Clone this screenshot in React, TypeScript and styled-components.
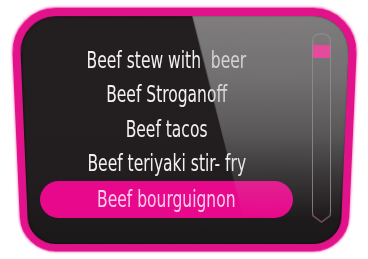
import React from "react";
import styled, { createGlobalStyle } from "styled-components";

const Global = createGlobalStyle`
  html, body { margin: 0; padding: 0; background: #ffffff; }
  body {
    width: 368px;
    height: 259px;
    overflow: hidden;
    font-family: "DejaVu Sans Condensed", "DejaVu Sans", sans-serif;
  }
`;

const Device = styled.div`
  position: relative;
  box-sizing: border-box;
  width: 337px;
  height: 245px;
  margin: 11px 0 0 16px;
  padding: 22px 22px 0 24px;
  display: flex;
  align-items: flex-start;
  gap: 19px;

  &::before {
    content: "";
    position: absolute;
    inset: 0;
    z-index: 0;
    box-sizing: border-box;
    border: 8px solid #e2128a;
    border-radius: 44px 44px 36px 36px;
    background: linear-gradient(to bottom, #231f20 0%, #221e1f 70%, #1b1819 100%);
    transform: perspective(400px) rotateX(-6deg);
    box-shadow: 0 0 2px 1px rgba(236, 60, 160, 0.45), inset 0 0 3px rgba(0, 0, 0, 0.8);
  }

  &::after {
    content: "";
    position: absolute;
    inset: 0;
    z-index: 2;
    box-sizing: border-box;
    border: 8px solid transparent;
    border-radius: 44px 44px 36px 36px;
    background: linear-gradient(
        to bottom,
        rgba(186, 186, 186, 0.6) 0%,
        rgba(186, 186, 186, 0.52) 25%,
        rgba(186, 186, 186, 0.36) 50%,
        rgba(186, 186, 186, 0.14) 70%,
        rgba(186, 186, 186, 0) 88%
      )
      padding-box;
    clip-path: polygon(174px 0, 100% 0, 100% 100%, 238px 100%);
    transform: perspective(400px) rotateX(-6deg);
    pointer-events: none;
  }
`;

const List = styled.ul`
  position: relative;
  z-index: 1;
  flex: none;
  width: 253px;
  margin: 0;
  padding: 10px 0 0;
  list-style: none;
  display: flex;
  flex-direction: column;
`;

const Item = styled.li<{ $active?: boolean }>`
  height: ${(p) => (p.$active ? 37 : 34.5)}px;
  display: flex;
  align-items: center;
  justify-content: center;
  border-radius: 19px;
  background: ${(p) => (p.$active ? "#e8088b" : "transparent")};
  color: ${(p) => (p.$active ? "#f8cde8" : "#f1f1f1")};
  font-size: 23px;
`;

const Label = styled.span`
  display: inline-block;
  white-space: pre;
  line-height: 1;
  transform: scaleX(0.75);
`;

const Scrollbar = styled.div`
  position: relative;
  z-index: 3;
  flex: none;
  width: 19px;
  display: flex;
  flex-direction: column;
`;

const Cap = styled.svg`
  display: block;
  width: 19px;
`;

const Track = styled.div`
  height: 168px;
  box-sizing: border-box;
  border-left: 1.5px solid rgba(145, 145, 145, 0.8);
  border-right: 1.5px solid rgba(145, 145, 145, 0.8);
`;

const Thumb = styled.div`
  height: 13px;
  background: #e64a9c;
`;

const items = [
  "Beef stew with  beer",
  "Beef Stroganoff",
  "Beef tacos",
  "Beef teriyaki stir- fry",
  "Beef bourguignon",
];

export default function App() {
  return (
    <>
      <Global />
      <Device>
        <List>
          {items.map((t, i) => (
            <Item key={t} $active={i === items.length - 1}>
              <Label>{t}</Label>
            </Item>
          ))}
        </List>
        <Scrollbar>
          <Cap viewBox="0 0 19 12" height={12}>
            <path
              d="M0.75 12 V7 Q0.75 1.5 9.5 0.8 Q18.25 1.5 18.25 7 V12"
              fill="none"
              stroke="rgba(150,140,145,0.7)"
              strokeWidth="1.5"
            />
          </Cap>
          <Track>
            <Thumb />
          </Track>
          <Cap viewBox="0 0 19 10" height={10}>
            <path
              d="M0.75 0 V2.5 L9.5 9 L18.25 2.5 V0"
              fill="none"
              stroke="rgba(150,100,125,0.7)"
              strokeWidth="1.5"
            />
          </Cap>
        </Scrollbar>
      </Device>
    </>
  );
}
